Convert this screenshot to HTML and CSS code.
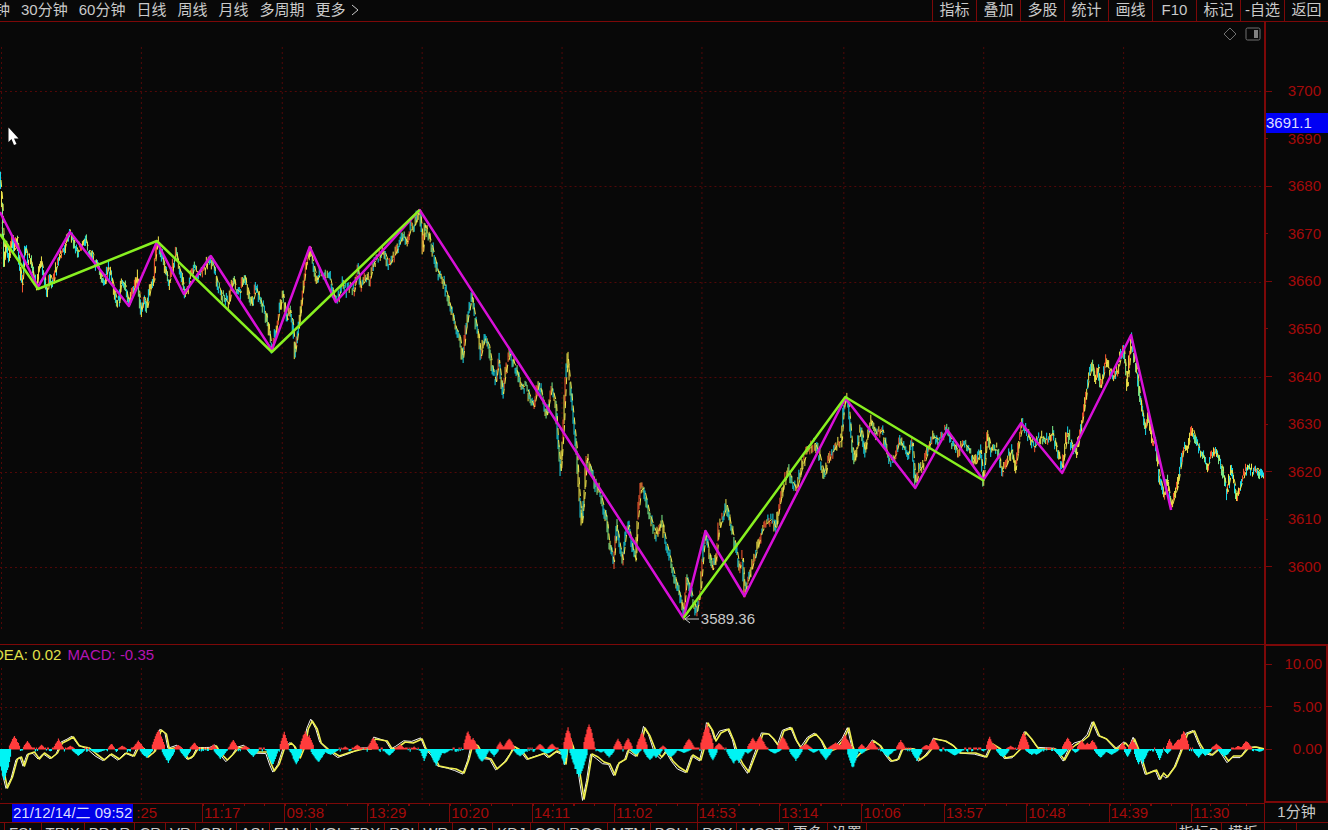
FILE: index.html
```html
<!DOCTYPE html>
<html lang="zh-CN">
<head>
<meta charset="utf-8">
<title>1分钟</title>
<link rel="stylesheet" href="styles.css">
</head>
<body>
<div class="app">
  <header class="topbar">
    <nav class="periods">
      <button type="button">钟</button>
      <button type="button">30分钟</button>
      <button type="button">60分钟</button>
      <button type="button">日线</button>
      <button type="button">周线</button>
      <button type="button">月线</button>
      <button type="button">多周期</button>
      <button type="button" class="more">更多<svg width="8" height="12" viewBox="0 0 8 12" aria-hidden="true"><path d="M1 1L7 6L1 11"/></svg></button>
    </nav>
    <nav class="tools">
      <button type="button">指标</button>
      <button type="button">叠加</button>
      <button type="button">多股</button>
      <button type="button">统计</button>
      <button type="button">画线</button>
      <button type="button">F10</button>
      <button type="button">标记</button>
      <button type="button">-自选</button>
      <button type="button">返回</button>
    </nav>
  </header>

  <main class="pane price">
    <svg class="plot" id="price-plot" viewBox="0 22 1265 622" preserveAspectRatio="none" role="img" aria-label="K线"></svg>
    <div class="corner">
      <button type="button" aria-label="标注"><svg width="14" height="14" viewBox="0 0 14 14"><path d="M7 1L13 7L7 13L1 7Z"/></svg></button>
      <button type="button" aria-label="侧栏"><svg width="16" height="14" viewBox="0 0 16 14"><rect x="1" y="1" width="14" height="12" rx="1.5"/><rect class="solid" x="9" y="3" width="4" height="8"/></svg></button>
    </div>
    <div class="low"><svg width="16" height="10" viewBox="0 0 16 10" aria-hidden="true"><path d="M15 5H1M6 1L1 5L6 9"/></svg>3589.36</div>
    <svg class="cursor" width="12" height="18" viewBox="0 0 12 18" aria-hidden="true"><path d="M0.5 0.5V15L3.500 12L6 18L8.500 17L6 11.500H10.500Z"/></svg>
  </main>
  <aside class="axis price-axis">
    <ul>
      <li>3700</li><li>3690</li><li>3680</li><li>3670</li><li>3660</li><li>3650</li><li>3640</li><li>3630</li><li>3620</li><li>3610</li><li>3600</li>
    </ul>
    <span class="current">3691.1</span>
  </aside>

  <section class="pane macd">
    <svg class="plot" id="macd-plot" viewBox="0 645 1265 158" preserveAspectRatio="none" role="img" aria-label="MACD"></svg>
    <div class="readout"><span class="dea">DEA: 0.02</span><span class="bar">MACD: -0.35</span></div>
  </section>
  <aside class="axis macd-axis">
    <ul><li>10.00</li><li>5.00</li><li>0.00</li></ul>
  </aside>

  <div class="times">
    <div class="lead"><span class="stamp">21/12/14/二 09:52</span><span>:25</span></div>
    <span>11:17</span><span>09:38</span><span>13:29</span><span>10:20</span><span>14:11</span><span>11:02</span><span>14:53</span><span>13:14</span><span>10:06</span><span>13:57</span><span>10:48</span><span>14:39</span><span>11:30</span>
  </div>
  <div class="unit">1分钟</div>

  <footer class="tabs">
    <nav class="indicators">
      <button type="button">FSL</button><button type="button">TRIX</button><button type="button">BRAR</button><button type="button">CR</button><button type="button">VR</button><button type="button">OBV</button><button type="button">ASI</button><button type="button">EMV</button><button type="button">VOL-TDX</button><button type="button">RSI</button><button type="button">WR</button><button type="button">SAR</button><button type="button">KDJ</button><button type="button">CCI</button><button type="button">ROC</button><button type="button">MTM</button><button type="button">BOLL</button><button type="button">PSY</button><button type="button">MCST</button><button type="button">更多</button><button type="button">设置</button>
    </nav>
    <nav class="templates">
      <button type="button">指标B</button><button type="button">模板</button><button type="button" class="square">+</button><span class="square"></span>
    </nav>
  </footer>
</div>
<script src="chart.js"></script>
</body>
</html>
```
FILE: styles.css
```css
:root {
  --bg: #080808;
  --line: #7c0808;
  --label: #a40a0a;
  --text: #cacaca;
}
* { box-sizing: border-box; }
body {
  margin: 0;
  background: var(--bg);
  color: var(--text);
  font: 15px/20px "Liberation Sans", "Noto Sans CJK SC", sans-serif;
}
button {
  margin: 0;
  padding: 0;
  border: 0;
  background: none;
  color: inherit;
  font: inherit;
  white-space: nowrap;
}
ul { list-style: none; margin: 0; padding: 0; }

.app {
  display: grid;
  grid-template-columns: minmax(0, 1fr) 64px;
  grid-template-rows: 22px minmax(0, 1fr) 159px 20px 7px;
  height: 100vh;
  overflow: hidden;
}

.topbar {
  grid-column: 1 / -1;
  display: flex;
  justify-content: space-between;
  border-bottom: 1px solid var(--line);
  line-height: 20px;
  overflow: hidden;
}
.periods { display: flex; gap: 11px; margin-left: -5px; }
.periods button { height: 20px; }
.more { display: flex; align-items: center; gap: 6px; }
.more svg { fill: none; stroke: var(--text); }
.tools { display: grid; grid-template-columns: repeat(9, 44px); }
.tools button { border-left: 1px solid var(--line); padding-bottom: 1px; }

.pane { position: relative; min-width: 0; overflow: hidden; }
.plot { display: block; width: 100%; height: 100%; }
.macd { border-top: 1px solid var(--line); }

.corner { position: absolute; top: 5px; right: 3px; display: flex; gap: 8px; }
.corner button { display: flex; }
.corner svg { fill: none; stroke: #707070; }
.corner .solid { fill: #808080; stroke: none; }
.low {
  position: absolute;
  left: 54.1%;
  top: 94.4%;
  display: flex;
  align-items: center;
  gap: 1px;
  line-height: 20px;
}
.low svg { fill: none; stroke: var(--text); }
.cursor { position: absolute; left: 8px; top: 105px; fill: #fff; }

.axis {
  position: relative;
  border-left: 2px solid var(--line);
  color: var(--label);
}
.axis ul {
  display: flex;
  flex-direction: column;
  justify-content: space-between;
  height: 100%;
}
.axis li {
  display: flex;
  align-items: center;
  justify-content: space-between;
  padding-right: 7px;
}
.axis li::before { content: ""; width: 6px; height: 1px; background: var(--line); }
.price-axis li:nth-child(even)::before { width: 2px; }
.price-axis ul { padding: 59px 0 67px; }
.macd-axis { border: 2px solid var(--line); }
.macd-axis ul { padding: 8px 0 42px; }
.macd-axis li { padding-right: 4px; }
.current {
  position: absolute;
  left: 0;
  right: 0;
  top: 91px;
  background: #0000f4;
  color: #dcdcff;
}

.readout { position: absolute; left: -7px; top: 0; display: flex; gap: 6px; }
.dea { color: #e0e04a; }
.readout .bar { color: #b414b4; }

.times {
  display: grid;
  grid-template-columns: minmax(0, 1010fr) repeat(12, minmax(0, 412fr)) minmax(0, 365fr);
  border-top: 1px solid var(--line);
  border-bottom: 1px solid var(--line);
  color: var(--label);
  line-height: 18px;
  overflow: hidden;
}
.times > span {
  border-left: 1px solid var(--line);
  padding-left: 1px;
  background: repeating-linear-gradient(90deg, var(--line) 0 1px, transparent 1px 25%) 0 0 / 100% 2px no-repeat;
}
.lead { display: flex; padding-left: 12px; gap: 3px; }
.stamp { padding: 0 1px; background: #0000e8; color: #dcdcff; }
.unit {
  border-left: 1px solid var(--line);
  border-bottom: 1px solid var(--line);
  text-align: center;
  line-height: 18px;
}

.tabs {
  grid-column: 1 / -1;
  display: flex;
  justify-content: space-between;
  align-items: flex-start;
  overflow: hidden;
}
.indicators, .templates { display: flex; }
.indicators { padding-left: 4px; }
.tabs button, .tabs span { padding: 0 4px; border-left: 1px solid var(--line); }
.indicators button:last-child { border-right: 1px solid var(--line); }
.templates button { padding: 0 2px; }
.templates button:nth-child(2) { padding: 0 6px; }
.templates .square { width: 32px; }
```
FILE: chart.js
```js
const NS = "http://www.w3.org/2000/svg";

function add(svg, d, stroke, width, extra) {
  const p = document.createElementNS(NS, "path");
  p.setAttribute("d", d);
  p.setAttribute("fill", "none");
  p.setAttribute("stroke", stroke);
  p.setAttribute("stroke-width", width);
  for (const k in extra || {}) p.setAttribute(k, extra[k]);
  svg.appendChild(p);
}

const parse = s => s.trim().split(/\s+/).map(p => p.split(",").map(Number));
const line = pts => "M" + pts.map(p => p.join(" ")).join("L");

let seed = 7;
function rnd() {
  seed = (seed * 16807) % 2147483647;
  return seed / 2147483647;
}

const columns = [1, 141, 282, 422, 562, 702, 844, 984, 1124];
function grid(svg, rows, top, bottom) {
  let d = "";
  rows.forEach(y => { d += `M0 ${y + 0.5}H1265`; });
  columns.forEach(x => { d += `M${x + 0.5} ${top}V${bottom}`; });
  add(svg, d, "#520808", 1, { "stroke-dasharray": "2 3" });
}

/* price */
const price = parse(`0,180 2,203 4,262 6,240 9,258 12,235 14,250 17,237 20,268 22,285 25,246 28,258 31,262 34,280 37,283 39,265 41,261
44,275 47,293 50,275 53,284 56,268 60,255 64,250 67,238 70,232 74,242 78,252 82,243 85,237 88,250 92,252 96,263 100,272 105,284
108,265 112,280 116,298 119,303 121,281 125,285 129,305 133,292 137,275 139,293 141,312 144,297 147,308 150,290 154,280 155,262
157,242 161,251 165,268 169,283 172,270 176,252 179,268 182,278 185,294 189,284 194,268 199,275 204,270 208,262 210,256 214,268
218,285 222,295 226,300 229,305 233,278 237,290 240,293 244,275 248,290 252,305 256,288 260,300 264,310 267,318 269,330 272,351
276,330 279,312 283,294 287,320 290,310 293,325 295,353 299,325 303,290 306,265 310,250 313,262 317,280 321,272 325,278 330,278
334,297 338,299 342,283 346,290 350,285 354,292 358,270 361,288 366,278 370,280 374,262 379,258 384,250 389,265 394,257 399,245
403,235 407,242 411,228 415,225 418,213 420,210 422,232 423,252 425,225 429,235 433,250 438,272 443,280 446,290 450,305 456,328
460,337 463,359 466,330 469,312 472,297 476,322 479,338 481,356 485,338 489,345 493,370 496,382 499,360 503,394 506,370 510,354
515,365 521,385 527,388 534,407 539,383 543,398 547,415 552,388 556,402 558,440 561,472 564,425 566,380 568,359 570,380 574,420
577,450 579,485 582,524 585,490 587,458 590,465 596,485 601,495 607,520 609,540 614,562 617,525 620,545 623,560 626,535 629,525
633,550 636,560 638,520 641,490 644,488 650,515 657,535 662,520 666,540 671,560 676,580 680,595 684,614 687,578 691,590 697,612
701,590 704,550 706,535 709,550 713,570 717,555 719,530 724,515 727,505 731,525 736,545 740,568 743,558 745,592 750,575 756,555
762,532 767,523 773,518 776,530 780,505 784,485 789,470 792,480 797,490 803,465 808,450 815,443 820,455 825,476 831,455 837,445
842,440 844,410 846,398 849,405 852,440 855,460 859,440 862,428 865,452 869,432 872,421 877,435 883,430 888,455 892,460 896,455
900,440 904,448 908,455 913,443 916,485 920,470 925,463 930,445 934,437 940,440 947,430 952,440 959,452 964,442 970,450 976,465
981,450 984,480 988,433 992,450 998,450 1003,472 1007,465 1012,450 1016,470 1020,440 1023,425 1028,435 1035,447 1042,437 1047,440
1053,433 1058,450 1063,468 1068,433 1073,445 1077,455 1083,420 1089,380 1093,364 1096,380 1099,367 1101,388 1107,362 1114,378
1119,368 1124,345 1128,386 1132,340 1137,365 1141,400 1146,430 1149,415 1153,442 1156,440 1160,475 1165,495 1168,480 1172,507
1178,487 1184,450 1189,445 1193,427 1197,442 1203,455 1208,466 1216,450 1222,465 1228,492 1232,470 1238,496 1244,478 1248,466
1253,472 1258,468 1265,480`);

const priceSvg = document.getElementById("price-plot");
grid(priceSvg, [91, 186, 282, 377, 472, 567], 47, 630);

const strokes = { "#f4e84a": "", "#ff5a32": "", "#18dcec": "", "#7cf08c": "" };
for (let i = 1; i < price.length; i++) {
  const [x0, y0] = price[i - 1], [x1, y1] = price[i];
  const rising = y1 < y0;
  const steps = Math.max(1, x1 - x0);
  for (let s = 0; s < steps; s++) {
    const x = Math.round(x0 + s) + 0.5;
    const a = y0 + (y1 - y0) * s / steps, b = y0 + (y1 - y0) * (s + 1) / steps;
    const jitter = (rnd() - 0.5) * 9;
    const top = Math.min(a, b) - 1 - rnd() * 3 + jitter;
    const end = Math.max(a, b) + 1 + rnd() * 3 + jitter;
    const r = rnd();
    const c = rising
      ? (r < 0.35 ? "#ff5a32" : r < 0.75 ? "#f4e84a" : "#18dcec")
      : (r < 0.5 ? "#18dcec" : r < 0.75 ? "#7cf08c" : "#f4e84a");
    strokes[c] += `M${x} ${top.toFixed(1)}V${end.toFixed(1)}`;
  }
}
for (const c in strokes) add(priceSvg, strokes[c], c, 1);
add(priceSvg, line(price.map(([x, y]) => [x + 1, y])), "#f4e84a", 1, { "stroke-dasharray": "7 5" });

const bold = { "stroke-linejoin": "round" };
add(priceSvg, line(parse(`0,212 38,287 70,232 129,306 157,242 184,294 211,256 272,350 310,247 336,302 420,210 684,618 706,531
745,596 846,398 916,488 948,430 984,480 1022,423 1063,473 1132,335 1172,510`)), "#d810d8", 2.5, bold);
add(priceSvg, line(parse("0,234 38,289 157,241 272,352 420,210")), "#88f020", 2.5, bold);
add(priceSvg, line(parse("684,618 846,397 985,481")), "#88f020", 2.5, bold);

/* MACD: x, height, half width */
const humps = parse(`14,14,5 27,9,4 41,5,3 58,11,4 70,4,4 111,6,3 122,4,4 138,9,5 158,20,6 178,5,4 194,7,4 213,5,3 233,10,4 245,4,4
284,18,4 305,19,5 309,15,4 345,3,3 357,5,4 373,12,5 400,5,4 414,3,2 468,20,4 473,12,4 500,8,3 509,12,5 540,6,4 552,6,4 568,24,4
589,28,5 618,11,4 628,12,4 642,18,5 663,4,3 689,11,5 707,27,6 719,7,4 753,12,5 760,14,6 783,14,5 806,6,6 836,7,8 845,16,4 848,10,4
862,6,3 872,9,5 901,10,4 927,5,5 934,12,5 990,14,3 994,6,3 1011,4,4 1024,18,5 1068,12,5 1082,10,4 1088,7,6 1093,10,4 1123,7,3
1133,10,4 1170,11,3 1179,11,6 1184,20,5 1217,6,5 1239,4,4 1247,9,5
4,-34,6 78,-7,6 97,-4,8 146,-9,6 168,-14,6 185,-9,5 220,-10,6 253,-8,5 272,-17,5 296,-16,5 318,-14,7 330,-6,8 389,-7,5 424,-12,3
436,-17,6 444,-5,6 482,-14,6 494,-8,4 520,-8,6 547,-5,7 564,-16,3 575,-15,5 579,-30,8 601,-4,4 609,-9,5 636,-6,5 650,-12,6 656,-9,6
671,-9,6 684,-4,7 713,-12,4 734,-15,7 739,-14,6 748,-5,4 775,-5,6 796,-12,6 814,-4,5 826,-11,6 853,-20,5 862,-5,4 888,-8,6 917,-12,5
955,-7,8 1003,-9,6 1032,-6,6 1037,-6,6 1061,-8,6 1076,-4,3 1101,-9,6 1112,-6,7 1128,-8,3 1139,-16,4 1143,-15,5 1160,-11,3 1168,-5,3
1199,-9,5 1206,-7,6 1225,-8,6 1260,-3,5`);
const zero = 749;
const macdSvg = document.getElementById("macd-plot");
grid(macdSvg, [707], 668, 800);
let up = "", down = "";
for (let x = 0; x < 1265; x++) {
  let hi = 0, lo = 0;
  humps.forEach(([cx, h, w]) => {
    const k = 1 - Math.abs(x - cx) / (w + 1);
    if (k <= 0) return;
    const size = Math.abs(h) * Math.pow(k, 0.7) * (0.88 + rnd() * 0.12);
    if (h > 0) hi = Math.max(hi, size);
    else lo = Math.max(lo, size);
  });
  if (!hi && !lo) { if (rnd() < 0.4) hi = 2; else lo = 1 + rnd() * 2; }
  if (hi) up += `M${x + 0.5} ${zero + 0.5}v${(-hi).toFixed(1)}`;
  if (lo) down += `M${x + 0.5} ${zero}v${lo.toFixed(1)}`;
}

const dif = parse(`0,750 3,775 6,789 11,778 16,760 20,758 23,767 27,755 33,753 38,760 43,754 50,759 56,754 61,742 67,739 72,736 78,745
88,749 95,755 103,761 110,755 118,760 125,754 133,757 138,745 143,748 147,758 154,752 158,735 160,729 165,733 168,748 177,746 182,752
187,760 192,757 197,747 210,748 215,745 220,755 226,761 232,755 237,747 244,746 250,753 266,753 270,765 273,772 278,765 283,750
290,742 294,746 299,759 304,745 307,728 311,720 316,728 320,742 328,751 338,757 350,753 362,748 370,748 374,738 386,740 391,748
396,747 404,741 412,742 421,738 425,748 432,755 438,767 448,769 455,770 463,774 468,760 472,742 477,745 483,758 490,760 496,770
505,762 511,752 514,746 521,752 527,760 536,757 544,754 548,758 556,752 563,755 565,765 568,735 572,745 578,768 583,800 587,780
591,755 597,758 603,763 609,765 614,776 618,764 625,760 628,750 636,757 641,740 644,727 649,735 655,752 661,758 666,752 672,762
678,768 686,773 692,756 700,761 704,745 707,722 712,730 715,740 720,732 728,728 733,740 737,755 742,765 748,773 753,760 757,748
762,733 768,733 773,738 778,745 783,730 791,727 796,740 801,748 808,737 815,733 821,740 827,753 835,748 843,738 848,727 852,745
856,758 862,752 868,748 873,740 880,745 886,756 891,762 898,760 902,750 914,748 919,761 926,756 931,748 934,738 945,740 953,745
960,754 975,754 986,758 992,743 1000,748 1005,759 1013,757 1020,750 1025,731 1031,738 1038,748 1055,748 1064,761 1070,748 1075,744
1082,740 1088,735 1093,721 1099,735 1106,738 1116,748 1125,742 1130,748 1134,738 1140,755 1146,775 1156,771 1160,780 1163,774
1167,778 1175,767 1181,752 1184,742 1187,733 1194,730 1199,742 1204,752 1212,756 1219,748 1228,762 1233,757 1241,757 1248,747
1256,746 1264,750`);
const wavy = dif.map(([x, y]) => [x, (y + rnd() * 2 - 1).toFixed(1)]);
add(macdSvg, line(wavy), "#f4f4f4", 1, bold);
add(macdSvg, line(dif.map(([x, y]) => [x + 1.5, y + (y < zero ? 1 : -1)])), "#f0f050", 1.6, bold);
add(macdSvg, up, "#ff3c3c", 1.2);
add(macdSvg, down, "#00f4f4", 1.2);
```
